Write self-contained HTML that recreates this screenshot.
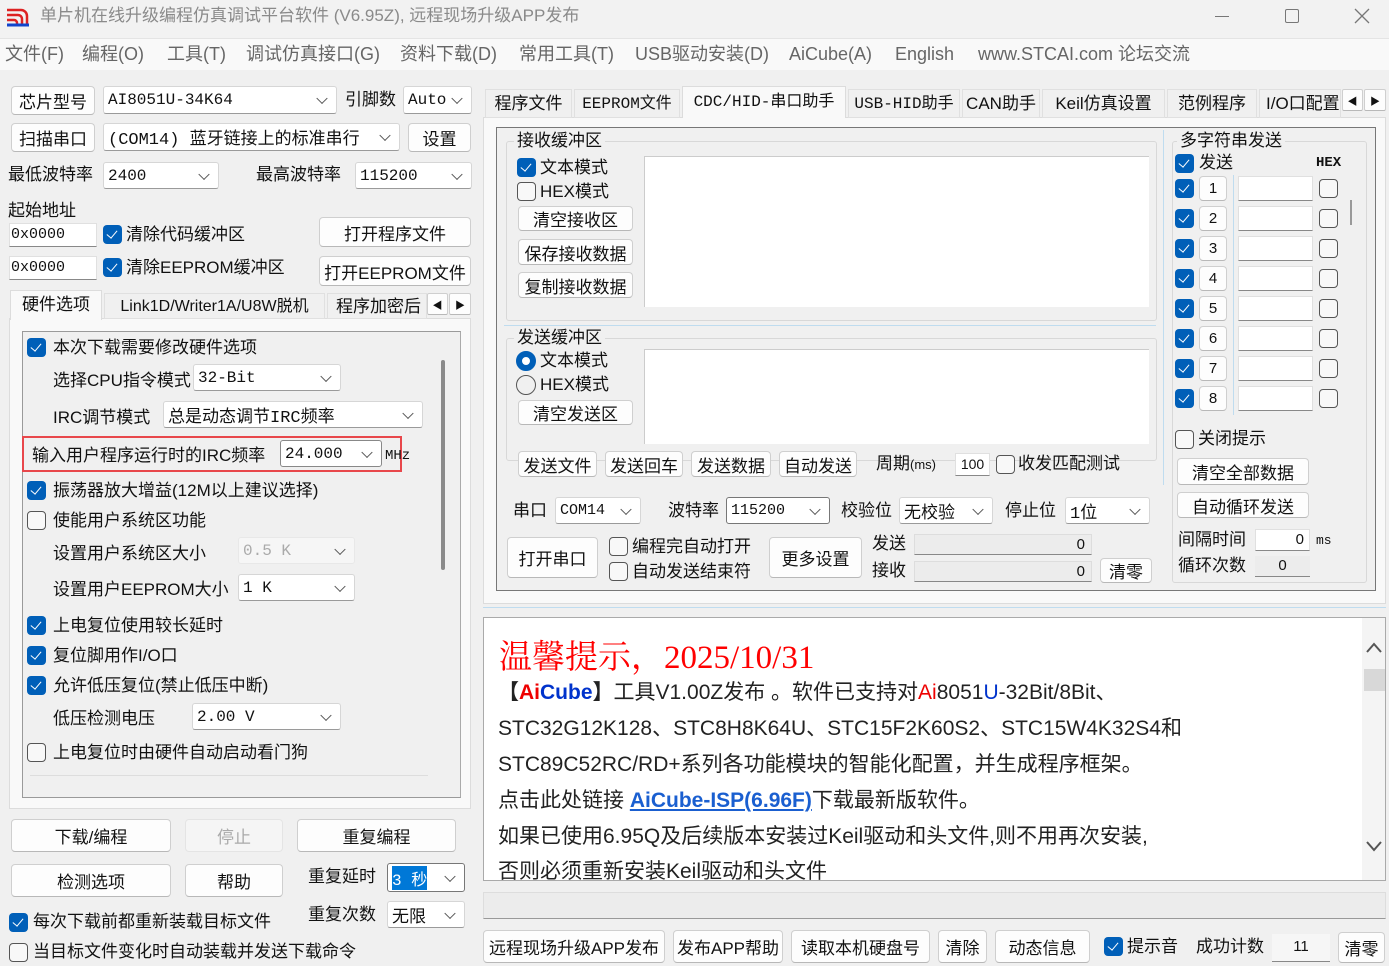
<!DOCTYPE html>
<html><head><meta charset="utf-8"><style>
*{box-sizing:border-box}
body{margin:0;width:1389px;height:966px;overflow:hidden;background:#f0f0f0;font-family:"Liberation Sans","Noto Sans CJK SC",sans-serif;font-size:17px;color:#111;position:relative}
.a{position:absolute;white-space:nowrap}
.l{position:absolute;white-space:nowrap;height:24px;line-height:24px}
.b{position:absolute;background:#fdfdfd;border:1px solid #cfcfcf;border-bottom-color:#b8b8b8;border-radius:4px;display:flex;align-items:center;justify-content:center;white-space:nowrap}
.s{position:absolute;background:#fff;border:1px solid #d6d6d6;border-bottom-color:#9a9a9a;border-radius:3px;white-space:nowrap;padding-left:4px;display:flex;align-items:center;font-family:"Liberation Mono","Noto Sans CJK SC",monospace;font-size:16px}
.s::after{content:"";position:absolute;right:10px;top:50%;width:7px;height:7px;border-right:1.5px solid #555;border-bottom:1.5px solid #555;transform:translateY(-70%) rotate(45deg)}
.c{position:absolute;width:19px;height:19px;background:#005fb8;border-radius:4px}
.c::after{content:"";position:absolute;left:6px;top:3px;width:5px;height:9px;border-right:1.5px solid #fff;border-bottom:1.5px solid #fff;transform:rotate(40deg)}
.u{position:absolute;width:19px;height:19px;border:1.5px solid #555;border-radius:4px;background:#f8f8f8}
.i{position:absolute;background:#fff;border:1px solid #e0e0e0;border-bottom-color:#888}
.g{position:absolute;border:1px solid #d8d8d8;border-radius:3px}
.m{font-family:"Liberation Mono","Noto Sans CJK SC",monospace}
</style></head><body>
<div class="a" style="left:0;top:0;width:1389px;height:38px;background:#f2f2f2"></div>
<svg class="a" style="left:6px;top:6px" width="24" height="22"><path d="M1 4h14a6 6 0 0 1 6 6v10" stroke="#d22" stroke-width="2.5" fill="none"/><path d="M1 9h11a4 4 0 0 1 4 4v7M1 14h7a3 3 0 0 1 3 3v3" stroke="#d22" stroke-width="2.5" fill="none"/><path d="M1 19h22" stroke="#14c" stroke-width="3"/></svg>
<div class="l" style="left:40px;top:4px;color:#8a8a8a;font-size:17px">单片机在线升级编程仿真调试平台软件 (V6.95Z), 远程现场升级APP发布</div>
<div class="a" style="left:1215px;top:16px;width:14px;height:1px;background:#777"></div>
<div class="a" style="left:1285px;top:9px;width:14px;height:14px;border:1.3px solid #777;border-radius:2px"></div>
<svg class="a" style="left:1354px;top:8px" width="16" height="16"><path d="M1 1L15 15M15 1L1 15" stroke="#777" stroke-width="1.3"/></svg>
<div class="a" style="left:0;top:38px;width:1389px;height:32px;background:#f9f9f9;border-top:1px solid #e4e4e4"></div>
<div class="l" style="left:5px;top:42px;color:#666;font-size:18px">文件(F)</div>
<div class="l" style="left:82px;top:42px;color:#666;font-size:18px">编程(O)</div>
<div class="l" style="left:167px;top:42px;color:#666;font-size:18px">工具(T)</div>
<div class="l" style="left:246px;top:42px;color:#666;font-size:18px">调试仿真接口(G)</div>
<div class="l" style="left:400px;top:42px;color:#666;font-size:18px">资料下载(D)</div>
<div class="l" style="left:519px;top:42px;color:#666;font-size:18px">常用工具(T)</div>
<div class="l" style="left:635px;top:42px;color:#666;font-size:18px">USB驱动安装(D)</div>
<div class="l" style="left:789px;top:42px;color:#666;font-size:18px">AiCube(A)</div>
<div class="l" style="left:895px;top:42px;color:#666;font-size:18px">English</div>
<div class="l" style="left:978px;top:42px;color:#666;font-size:18px">www.STCAI.com 论坛交流</div>

<div class="b" style="left:11px;top:86px;width:84px;height:29px">芯片型号</div>
<div class="s" style="left:103px;top:86px;width:234px;height:28px">AI8051U-34K64</div>
<div class="l" style="left:345px;top:88px">引脚数</div>
<div class="s" style="left:403px;top:86px;width:69px;height:28px">Auto</div>
<div class="b" style="left:11px;top:123px;width:84px;height:29px">扫描串口</div>
<div class="s" style="left:103px;top:123px;width:297px;height:28px;font-size:17px">(COM14) 蓝牙链接上的标准串行</div>
<div class="b" style="left:408px;top:123px;width:63px;height:29px">设置</div>
<div class="l" style="left:8px;top:163px">最低波特率</div>
<div class="s" style="left:103px;top:162px;width:116px;height:27px">2400</div>
<div class="l" style="left:256px;top:163px">最高波特率</div>
<div class="s" style="left:355px;top:162px;width:117px;height:27px">115200</div>
<div class="l" style="left:8px;top:199px">起始地址</div>
<div class="i m" style="left:9px;top:223px;width:88px;height:24px;font-size:15px;line-height:22px;padding-left:1px">0x0000</div>
<div class="c" style="left:103px;top:225px"></div>
<div class="l" style="left:126px;top:223px">清除代码缓冲区</div>
<div class="b" style="left:319px;top:217px;width:152px;height:30px">打开程序文件</div>
<div class="i m" style="left:9px;top:256px;width:88px;height:24px;font-size:15px;line-height:22px;padding-left:1px">0x0000</div>
<div class="c" style="left:103px;top:258px"></div>
<div class="l" style="left:126px;top:256px">清除EEPROM缓冲区</div>
<div class="b" style="left:319px;top:256px;width:152px;height:30px">打开EEPROM文件</div>
<div class="a" style="left:9px;top:318px;width:462px;height:491px;background:#f9f9f9;border:1px solid #dcdcdc"></div>
<div class="a" style="left:10px;top:290px;width:92px;height:30px;background:#f9f9f9;border:1px solid #dcdcdc;border-bottom:none;text-align:center;line-height:28px">硬件选项</div>
<div class="a" style="left:104px;top:293px;width:221px;height:26px;border:1px solid #e0e0e0;text-align:center;line-height:26px;font-size:16px">Link1D/Writer1A/U8W脱机</div>
<div class="a" style="left:327px;top:293px;width:100px;height:26px;border:1px solid #e0e0e0;line-height:26px;padding-left:8px;overflow:hidden">程序加密后</div>
<div class="b" style="left:427px;top:293px;width:21px;height:22px;font-size:10px;border-radius:2px">◀</div>
<div class="b" style="left:449px;top:293px;width:22px;height:22px;font-size:10px;border-radius:2px">▶</div>
<div class="a" style="left:22px;top:331px;width:439px;height:467px;border:1px solid #9a9a9a;border-right-color:#aaa;background:#f0f0f0"></div>
<div class="a" style="left:441px;top:360px;width:4px;height:210px;background:#8a8a8a;border-radius:2px"></div>
<div class="a" style="left:30px;top:775px;width:398px;height:1px;background:#ddd"></div>
<div class="c" style="left:27px;top:338px"></div><div class="l" style="left:53px;top:336px">本次下载需要修改硬件选项</div>
<div class="l" style="left:53px;top:369px">选择CPU指令模式</div>
<div class="s" style="left:193px;top:364px;width:148px;height:27px">32-Bit</div>
<div class="l" style="left:53px;top:406px">IRC调节模式</div>
<div class="s" style="left:163px;top:401px;width:260px;height:27px;font-size:17px">总是动态调节IRC频率</div>
<div class="a" style="left:22px;top:436px;width:380px;height:36px;border:2px solid #e8474b"></div>
<div class="l" style="left:32px;top:444px">输入用户程序运行时的IRC频率</div>
<div class="s" style="left:280px;top:440px;width:102px;height:27px;border-color:#888">24.000</div>
<div class="l m" style="left:385px;top:444px;font-size:14px">MHz</div>
<div class="c" style="left:27px;top:481px"></div><div class="l" style="left:53px;top:479px">振荡器放大增益(12M以上建议选择)</div>
<div class="u" style="left:27px;top:511px"></div><div class="l" style="left:53px;top:509px">使能用户系统区功能</div>
<div class="l" style="left:53px;top:542px">设置用户系统区大小</div>
<div class="s" style="left:238px;top:537px;width:117px;height:27px;color:#aaa;background:#f6f6f6;border-color:#e8e8e8">0.5 K</div>
<div class="l" style="left:53px;top:578px">设置用户EEPROM大小</div>
<div class="s" style="left:238px;top:574px;width:117px;height:27px">1   K</div>
<div class="c" style="left:27px;top:616px"></div><div class="l" style="left:53px;top:614px">上电复位使用较长延时</div>
<div class="c" style="left:27px;top:646px"></div><div class="l" style="left:53px;top:644px">复位脚用作I/O口</div>
<div class="c" style="left:27px;top:676px"></div><div class="l" style="left:53px;top:674px">允许低压复位(禁止低压中断)</div>
<div class="l" style="left:53px;top:707px">低压检测电压</div>
<div class="s" style="left:192px;top:703px;width:149px;height:27px">2.00 V</div>
<div class="u" style="left:27px;top:743px"></div><div class="l" style="left:53px;top:741px">上电复位时由硬件自动启动看门狗</div>
<div class="b" style="left:11px;top:819px;width:160px;height:33px">下载/编程</div>
<div class="b" style="left:185px;top:819px;width:98px;height:33px;color:#aaa;background:#f5f5f5;border-color:#e4e4e4">停止</div>
<div class="b" style="left:297px;top:819px;width:159px;height:33px">重复编程</div>
<div class="b" style="left:11px;top:864px;width:160px;height:33px">检测选项</div>
<div class="b" style="left:185px;top:864px;width:98px;height:33px">帮助</div>
<div class="l" style="left:308px;top:865px">重复延时</div>
<div class="s" style="left:387px;top:863px;width:78px;height:29px;border-color:#777"><span style="background:#0078d7;color:#fff;font-size:16px">3 秒</span></div>
<div class="c" style="left:9px;top:913px"></div><div class="l" style="left:33px;top:910px">每次下载前都重新装载目标文件</div>
<div class="l" style="left:308px;top:903px">重复次数</div>
<div class="s" style="left:387px;top:901px;width:78px;height:27px;font-size:17px">无限</div>
<div class="u" style="left:9px;top:943px"></div><div class="l" style="left:33px;top:940px">当目标文件变化时自动装载并发送下载命令</div>

<div class="a" style="left:483px;top:117px;width:903px;height:487px;background:#f9f9f9;border:1px solid #dcdcdc"></div>
<div class="a" style="left:485px;top:89px;width:87px;height:29px;border:1px solid #e0e0e0;text-align:center;line-height:28px">程序文件</div>
<div class="a m" style="left:574px;top:89px;width:106px;height:29px;border:1px solid #e0e0e0;text-align:center;line-height:28px;font-size:16px">EEPROM文件</div>
<div class="a m" style="left:682px;top:86px;width:164px;height:32px;background:#f9f9f9;border:1px solid #dcdcdc;border-bottom:none;text-align:center;line-height:30px;font-size:16px">CDC/HID-串口助手</div>
<div class="a m" style="left:848px;top:89px;width:112px;height:29px;border:1px solid #e0e0e0;text-align:center;line-height:28px;font-size:16px">USB-HID助手</div>
<div class="a" style="left:962px;top:89px;width:78px;height:29px;border:1px solid #e0e0e0;text-align:center;line-height:28px">CAN助手</div>
<div class="a" style="left:1042px;top:89px;width:123px;height:29px;border:1px solid #e0e0e0;text-align:center;line-height:28px">Keil仿真设置</div>
<div class="a" style="left:1167px;top:89px;width:90px;height:29px;border:1px solid #e0e0e0;text-align:center;line-height:28px">范例程序</div>
<div class="a" style="left:1259px;top:89px;width:82px;height:29px;border:1px solid #e0e0e0;line-height:28px;padding-left:6px;overflow:hidden">I/O口配置</div>
<div class="b" style="left:1342px;top:89px;width:21px;height:22px;font-size:10px;border-radius:2px">◀</div>
<div class="b" style="left:1364px;top:89px;width:22px;height:22px;font-size:10px;border-radius:2px">▶</div>
<div class="a" style="left:496px;top:127px;width:880px;height:464px;border:1px solid #777;background:#f0f0f0"></div>
<div class="g" style="left:506px;top:141px;width:651px;height:180px"></div>
<div class="l" style="left:514px;top:129px;background:#f0f0f0;padding:0 3px">接收缓冲区</div>
<div class="c" style="left:517px;top:158px"></div><div class="l" style="left:540px;top:156px">文本模式</div>
<div class="u" style="left:517px;top:182px"></div><div class="l" style="left:540px;top:180px">HEX模式</div>
<div class="b" style="left:518px;top:206px;width:115px;height:25px">清空接收区</div>
<div class="b" style="left:518px;top:239px;width:115px;height:26px">保存接收数据</div>
<div class="b" style="left:518px;top:272px;width:115px;height:26px">复制接收数据</div>
<div class="a" style="left:644px;top:156px;width:505px;height:151px;background:#fff;border:1px solid #ccc;border-bottom:none;border-right:none"></div>
<div class="a" style="left:504px;top:325px;width:652px;height:1px;background:#bfdcef"></div>
<div class="g" style="left:506px;top:338px;width:651px;height:123px"></div>
<div class="l" style="left:514px;top:326px;background:#f0f0f0;padding:0 3px">发送缓冲区</div>
<div class="a" style="left:516px;top:351px;width:20px;height:20px;border-radius:50%;border:6px solid #005fb8;background:#fff"></div><div class="l" style="left:540px;top:349px">文本模式</div>
<div class="a" style="left:516px;top:375px;width:20px;height:20px;border-radius:50%;border:1.5px solid #555"></div><div class="l" style="left:540px;top:373px">HEX模式</div>
<div class="b" style="left:518px;top:400px;width:115px;height:25px">清空发送区</div>
<div class="a" style="left:644px;top:349px;width:505px;height:95px;background:#fff;border:1px solid #ccc;border-bottom:none;border-right:none"></div>
<div class="b" style="left:518px;top:451px;width:79px;height:26px">发送文件</div>
<div class="b" style="left:605px;top:451px;width:78px;height:26px">发送回车</div>
<div class="b" style="left:691px;top:451px;width:80px;height:26px">发送数据</div>
<div class="b" style="left:779px;top:451px;width:78px;height:26px">自动发送</div>
<div class="l" style="left:876px;top:452px">周期<span style="font-size:13px">(ms)</span></div>
<div class="i" style="left:955px;top:453px;width:35px;height:23px;font-size:14px;text-align:center;line-height:21px">100</div>
<div class="u" style="left:996px;top:455px"></div><div class="l" style="left:1018px;top:452px">收发匹配测试</div>
<div class="a" style="left:1163px;top:130px;width:1px;height:355px;background:#bfdcef"></div>
<div class="l" style="left:513px;top:499px">串口</div>
<div class="s" style="left:555px;top:497px;width:86px;height:27px;font-size:15px">COM14</div>
<div class="l" style="left:668px;top:499px">波特率</div>
<div class="s" style="left:726px;top:497px;width:104px;height:27px;border-color:#777;font-size:15px">115200</div>
<div class="l" style="left:841px;top:499px">校验位</div>
<div class="s" style="left:899px;top:497px;width:94px;height:27px;font-size:17px">无校验</div>
<div class="l" style="left:1005px;top:499px">停止位</div>
<div class="s" style="left:1065px;top:497px;width:85px;height:27px;font-size:17px">1位</div>
<div class="b" style="left:507px;top:537px;width:91px;height:41px">打开串口</div>
<div class="u" style="left:609px;top:537px"></div><div class="l" style="left:632px;top:535px">编程完自动打开</div>
<div class="u" style="left:609px;top:562px"></div><div class="l" style="left:632px;top:560px">自动发送结束符</div>
<div class="b" style="left:769px;top:537px;width:93px;height:41px">更多设置</div>
<div class="l" style="left:872px;top:532px">发送</div>
<div class="a" style="left:914px;top:534px;width:178px;height:21px;background:#ececec;border:1px solid #ddd;border-bottom-color:#888;text-align:right;padding-right:6px;font-size:15px;line-height:19px">0</div>
<div class="l" style="left:872px;top:559px">接收</div>
<div class="a" style="left:914px;top:561px;width:178px;height:21px;background:#ececec;border:1px solid #ddd;border-bottom-color:#888;text-align:right;padding-right:6px;font-size:15px;line-height:19px">0</div>
<div class="b" style="left:1100px;top:558px;width:52px;height:25px">清零</div>
<div class="g" style="left:1172px;top:141px;width:195px;height:442px"></div>
<div class="l" style="left:1177px;top:129px;background:#f0f0f0;padding:0 3px">多字符串发送</div>
<div class="c" style="left:1175px;top:154px"></div><div class="l" style="left:1199px;top:151px">发送</div>
<div class="l m" style="left:1316px;top:151px;font-size:14px;font-weight:bold">HEX</div>
<div class="a" style="left:1233px;top:175px;width:1px;height:240px;background:#bfdcef"></div>
<div class="a" style="left:1350px;top:200px;width:2px;height:25px;background:#999"></div>
<div class="c" style="left:1175px;top:179px"></div><div class="b" style="left:1199px;top:176px;width:28px;height:25px;font-size:15px">1</div><div class="i" style="left:1238px;top:176px;width:75px;height:25px"></div><div class="u" style="left:1319px;top:179px"></div>
<div class="c" style="left:1175px;top:209px"></div><div class="b" style="left:1199px;top:206px;width:28px;height:25px;font-size:15px">2</div><div class="i" style="left:1238px;top:206px;width:75px;height:25px"></div><div class="u" style="left:1319px;top:209px"></div>
<div class="c" style="left:1175px;top:239px"></div><div class="b" style="left:1199px;top:236px;width:28px;height:25px;font-size:15px">3</div><div class="i" style="left:1238px;top:236px;width:75px;height:25px"></div><div class="u" style="left:1319px;top:239px"></div>
<div class="c" style="left:1175px;top:269px"></div><div class="b" style="left:1199px;top:266px;width:28px;height:25px;font-size:15px">4</div><div class="i" style="left:1238px;top:266px;width:75px;height:25px"></div><div class="u" style="left:1319px;top:269px"></div>
<div class="c" style="left:1175px;top:299px"></div><div class="b" style="left:1199px;top:296px;width:28px;height:25px;font-size:15px">5</div><div class="i" style="left:1238px;top:296px;width:75px;height:25px"></div><div class="u" style="left:1319px;top:299px"></div>
<div class="c" style="left:1175px;top:329px"></div><div class="b" style="left:1199px;top:326px;width:28px;height:25px;font-size:15px">6</div><div class="i" style="left:1238px;top:326px;width:75px;height:25px"></div><div class="u" style="left:1319px;top:329px"></div>
<div class="c" style="left:1175px;top:359px"></div><div class="b" style="left:1199px;top:356px;width:28px;height:25px;font-size:15px">7</div><div class="i" style="left:1238px;top:356px;width:75px;height:25px"></div><div class="u" style="left:1319px;top:359px"></div>
<div class="c" style="left:1175px;top:389px"></div><div class="b" style="left:1199px;top:386px;width:28px;height:25px;font-size:15px">8</div><div class="i" style="left:1238px;top:386px;width:75px;height:25px"></div><div class="u" style="left:1319px;top:389px"></div>
<div class="u" style="left:1175px;top:430px"></div><div class="l" style="left:1198px;top:427px">关闭提示</div>
<div class="b" style="left:1177px;top:458px;width:132px;height:27px">清空全部数据</div>
<div class="b" style="left:1177px;top:492px;width:132px;height:26px">自动循环发送</div>
<div class="l" style="left:1178px;top:528px">间隔时间</div>
<div class="i" style="left:1255px;top:529px;width:55px;height:22px;text-align:right;padding-right:5px;font-size:15px;line-height:20px">0</div>
<div class="l m" style="left:1316px;top:529px;font-size:13px">ms</div>
<div class="l" style="left:1178px;top:554px">循环次数</div>
<div class="a" style="left:1255px;top:556px;width:55px;height:21px;background:#ececec;border-bottom:1px solid #888;text-align:center;font-size:15px;line-height:20px">0</div>
<div class="a" style="left:483px;top:607px;width:903px;height:1px;background:#bfdcef"></div>
<div class="a" style="left:483px;top:617px;width:903px;height:264px;background:#fff;border:1px solid #aaa;overflow:hidden">
 <div class="a" style="left:15px;top:20px;color:#f00;font-size:33px;line-height:40px;font-family:'Liberation Serif','Noto Serif CJK SC',serif">温馨提示，2025/10/31</div>
 <div class="a" style="left:14px;top:60px;font-size:21px;line-height:30px;color:#222"><b>【<span style="color:#e00">Ai</span><span style="color:#0033cc">Cube</span>】</b>工具V1.00Z发布 。软件已支持对<span style="color:#e00">Ai</span>8051<span style="color:#0033cc">U</span>-32Bit/8Bit、</div>
 <div class="a" style="left:14px;top:96px;font-size:21px;line-height:30px;color:#222">STC32G12K128、STC8H8K64U、STC15F2K60S2、STC15W4K32S4和</div>
 <div class="a" style="left:14px;top:132px;font-size:21px;line-height:30px;color:#222">STC89C52RC/RD+系列各功能模块的智能化配置，并生成程序框架。</div>
 <div class="a" style="left:14px;top:168px;font-size:21px;line-height:30px;color:#222">点击此处链接 <span style="color:#1a5fd0;text-decoration:underline;font-weight:bold">AiCube-ISP(6.96F)</span>下载最新版软件。</div>
 <div class="a" style="left:14px;top:204px;font-size:21px;line-height:30px;color:#222">如果已使用6.95Q及后续版本安装过Keil驱动和头文件,则不用再次安装,</div>
 <div class="a" style="left:14px;top:239px;font-size:21px;line-height:30px;color:#222">否则必须重新安装Keil驱动和头文件</div>
 <div class="a" style="left:878px;top:0;width:24px;height:263px;background:#f4f4f4"></div>
 <svg class="a" style="left:882px;top:24px" width="16" height="12"><path d="M1 10L8 2L15 10" stroke="#555" stroke-width="2" fill="none"/></svg>
 <div class="a" style="left:880px;top:51px;width:21px;height:22px;background:#d8d8d8"></div>
 <svg class="a" style="left:882px;top:222px" width="16" height="12"><path d="M1 2L8 10L15 2" stroke="#555" stroke-width="2" fill="none"/></svg>
</div>
<div class="a" style="left:483px;top:892px;width:903px;height:27px;background:#ececec;border:1px solid #ddd;border-bottom-color:#999"></div>
<div class="b" style="left:483px;top:930px;width:182px;height:33px">远程现场升级APP发布</div>
<div class="b" style="left:673px;top:930px;width:110px;height:33px">发布APP帮助</div>
<div class="b" style="left:791px;top:930px;width:139px;height:33px">读取本机硬盘号</div>
<div class="b" style="left:938px;top:930px;width:49px;height:33px">清除</div>
<div class="b" style="left:995px;top:930px;width:95px;height:33px">动态信息</div>
<div class="c" style="left:1104px;top:937px"></div><div class="l" style="left:1127px;top:935px">提示音</div>
<div class="l" style="left:1196px;top:935px">成功计数</div>
<div class="a" style="left:1272px;top:934px;width:58px;height:28px;background:#f6f6f6;border-bottom:1px solid #888;text-align:center;line-height:26px;font-size:15px">11</div>
<div class="b" style="left:1338px;top:932px;width:47px;height:31px">清零</div>
</body></html>
